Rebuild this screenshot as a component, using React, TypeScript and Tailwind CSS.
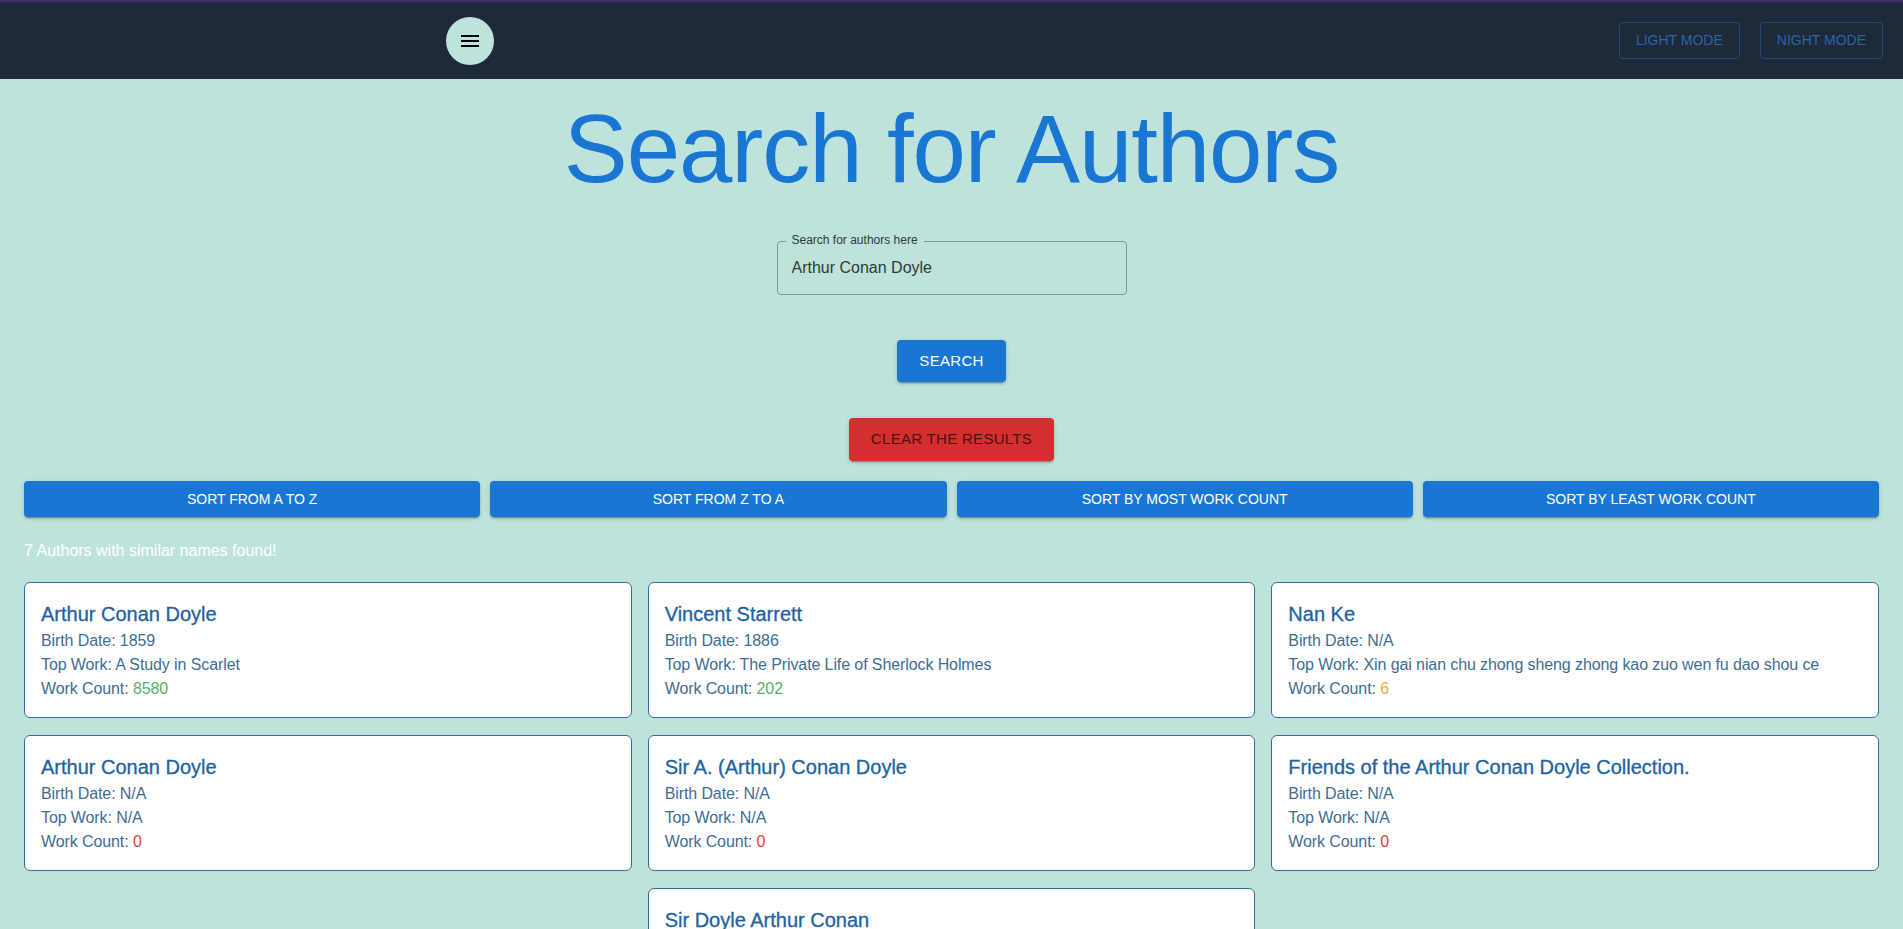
import { useState } from 'react'

type Author = {
  name: string
  birth: string
  topWork: string
  workCount: number
}

const authors: Author[] = [
  { name: 'Arthur Conan Doyle', birth: '1859', topWork: 'A Study in Scarlet', workCount: 8580 },
  { name: 'Vincent  Starrett', birth: '1886', topWork: 'The Private Life of Sherlock Holmes', workCount: 202 },
  { name: 'Nan Ke', birth: 'N/A', topWork: 'Xin gai nian chu zhong sheng zhong kao zuo wen fu dao shou ce', workCount: 6 },
  { name: 'Arthur Conan Doyle', birth: 'N/A', topWork: 'N/A', workCount: 0 },
  { name: 'Sir A. (Arthur) Conan Doyle', birth: 'N/A', topWork: 'N/A', workCount: 0 },
  { name: 'Friends of the Arthur Conan Doyle Collection.', birth: 'N/A', topWork: 'N/A', workCount: 0 },
  { name: 'Sir Doyle Arthur Conan', birth: 'N/A', topWork: 'N/A', workCount: 0 }
]

const sortLabels = ['Sort from A to Z', 'Sort from Z to A', 'Sort by most work count', 'Sort by least work count']

function countColor(n: number) {
  if (n >= 100) return 'text-[#5aae6a]'
  if (n > 0) return 'text-[#e2b43c]'
  return 'text-[#e0403c]'
}

function AuthorCard({ author }: { author: Author }) {
  return (
    <div className="w-[calc((100%-32px)/3)] bg-white border border-[#2f6ca6] rounded-[6px] px-4 py-4">
      <div className="text-[20px] leading-[30px] font-medium text-[#2262a0] [-webkit-text-stroke:0.3px_#2262a0]">
        {author.name}
      </div>
      <div className="text-[16px] leading-6 text-[#3f6d92] tracking-[-0.1px]">Birth Date: {author.birth}</div>
      <div className="text-[16px] leading-6 text-[#3f6d92] tracking-[-0.1px]">Top Work: {author.topWork}</div>
      <div className="text-[16px] leading-6 text-[#3f6d92] tracking-[-0.1px]">
        Work Count: <span className={countColor(author.workCount)}>{author.workCount}</span>
      </div>
    </div>
  )
}

const shadow =
  'shadow-[0_3px_1px_-2px_rgba(0,0,0,0.2),0_2px_2px_0_rgba(0,0,0,0.14),0_1px_5px_0_rgba(0,0,0,0.12)]'

export default function App() {
  const [query, setQuery] = useState('Arthur Conan Doyle')

  return (
    <div className="min-h-screen bg-[#bee3dc] font-['Liberation_Sans',Arial,sans-serif]">
      {/* Top bar */}
      <header className="h-[79px] bg-[#1e2939] border-t-2 border-[#3d2f72] flex items-center">
        <div className="w-[446px] shrink-0" />
        <button className="w-12 h-12 rounded-full bg-[#bee3dc] flex items-center justify-center">
          <svg viewBox="0 0 24 24" width="24" height="24" fill="#000">
            <path d="M3 18h18v-2H3zm0-5h18v-2H3zm0-7v2h18V6z" />
          </svg>
        </button>
        <div className="ml-auto mr-5 flex gap-5">
          <button className="h-[37px] px-[16px] border border-[#24487a] rounded-[4px] text-[14px] uppercase text-[#2b64a8]">
            Light Mode
          </button>
          <button className="h-[37px] px-[16px] border border-[#24487a] rounded-[4px] text-[14px] uppercase text-[#2b64a8]">
            Night Mode
          </button>
        </div>
      </header>

      <main className="px-6 pb-10">
        <h1 className="mt-[14px] text-center text-[96px] leading-[112px] font-normal tracking-[-1.1px] text-[#1976d2]">
          Search for Authors
        </h1>

        <div className="mt-[36px] flex justify-center">
          <div className="relative w-[350px]">
            <label className="absolute left-[9px] -top-[8px] px-[6px] bg-[#bee3dc] text-[12px] leading-[14px] text-[#2c3a38]">
              Search for authors here
            </label>
            <input
              value={query}
              onChange={(e) => setQuery(e.target.value)}
              className="w-full h-[54px] px-[14px] bg-transparent border border-[#7d9c97] rounded-[4px] text-[16px] text-[#2f3a39] outline-none"
            />
          </div>
        </div>

        <div className="mt-[45px] flex justify-center">
          <button className={`h-[42px] px-[22px] bg-[#1976d2] text-white rounded-[4px] text-[15px] uppercase tracking-[0.3px] ${shadow}`}>
            Search
          </button>
        </div>

        <div className="mt-[36px] flex justify-center">
          <button className={`h-[43px] px-[22px] bg-[#d32f2f] text-[#4a1212] rounded-[4px] text-[15px] uppercase tracking-[0.3px] ${shadow}`}>
            Clear the results
          </button>
        </div>

        <div className="mt-[20px] grid grid-cols-4 gap-[10px]">
          {sortLabels.map((label) => (
            <button
              key={label}
              className={`h-[36px] bg-[#1976d2] text-white rounded-[4px] text-[14px] uppercase ${shadow}`}
            >
              {label}
            </button>
          ))}
        </div>

        <p className="mt-[22px] text-[16px] leading-6 text-white">7 Authors with similar names found!</p>

        <div className="mt-[19px] flex flex-wrap justify-center gap-x-4 gap-y-[17px]">
          {authors.map((a, i) => (
            <AuthorCard key={i} author={a} />
          ))}
        </div>
      </main>
    </div>
  )
}
